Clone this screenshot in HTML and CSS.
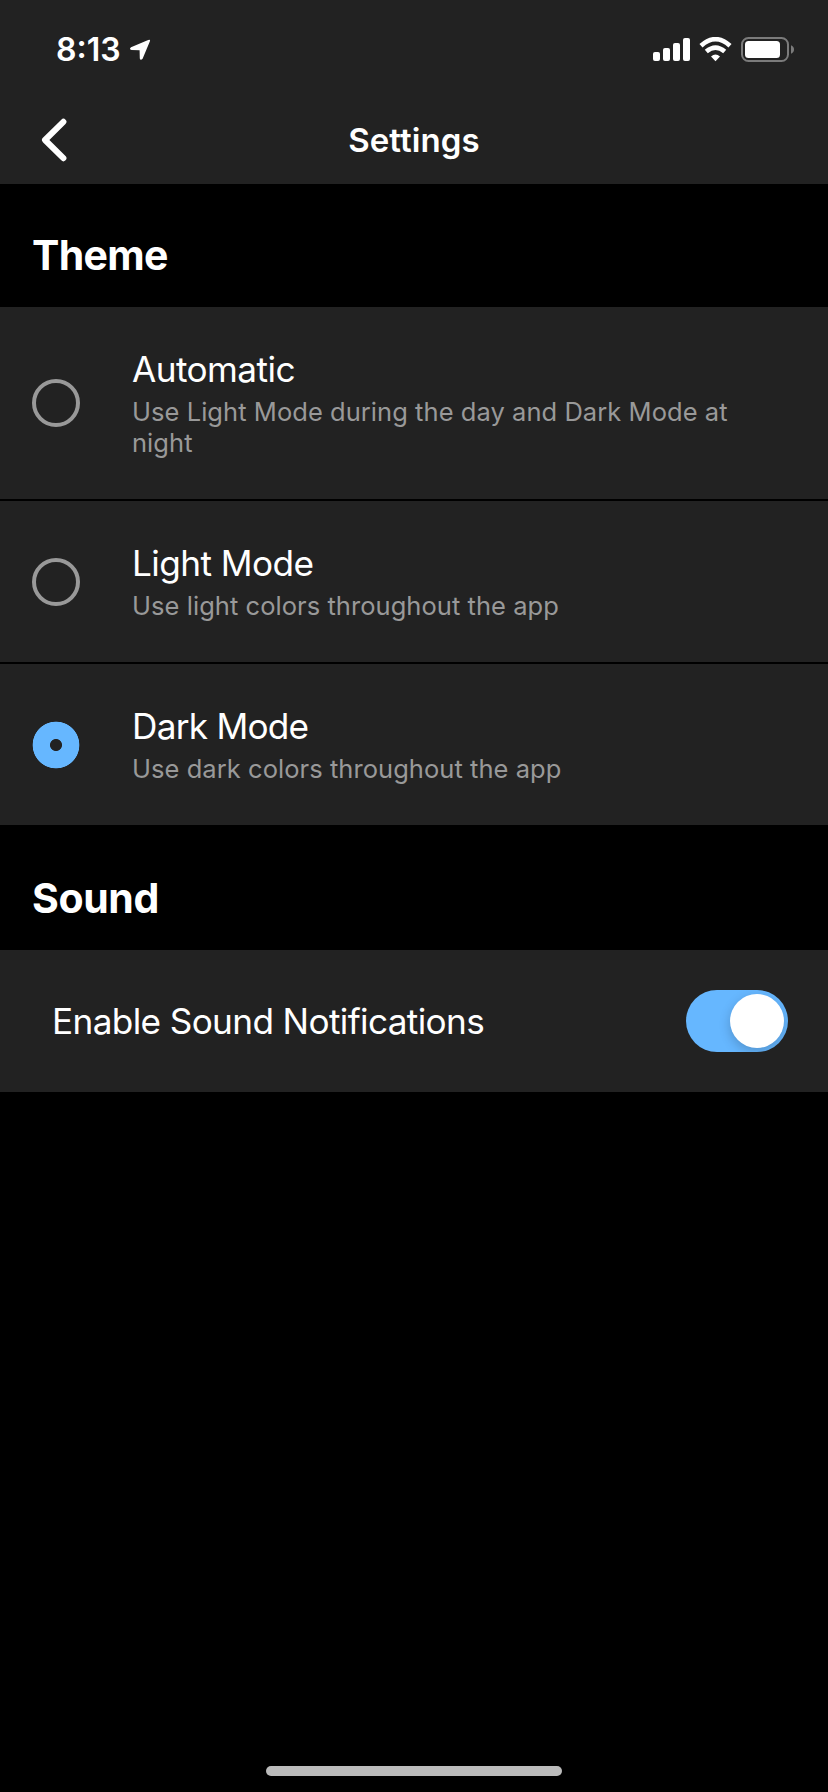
FILE: index.html
```html
<!DOCTYPE html>
<html lang="en">
<head>
<meta charset="utf-8">
<title>Settings</title>
<link rel="stylesheet" href="styles.css">
</head>
<body>
<div class="screen">
  <div class="status-bar">
    <div class="status-left">
      <span class="clock">8:13</span>
      <svg class="location" width="22" height="22" viewBox="0 0 22 22"><path d="M2 8.2 19.2 1 Q21.8 0 20.8 2.6 L13.6 19.8 Q11.4 22 10.8 19.4 L10.6 11.2 2.6 11 Q-.4 10.4 2 8.2Z" fill="#fff"/></svg>
    </div>
    <svg class="indicators" width="142" height="26" viewBox="653 37 142 26">
      <g fill="#fff">
        <rect x="653" y="52" width="7" height="9" rx="2"/>
        <rect x="663" y="48" width="7" height="13" rx="2"/>
        <rect x="673" y="43" width="7" height="18" rx="2"/>
        <rect x="683" y="38" width="7" height="23" rx="2"/>
        <path d="M715.5 61.2 711 56.6Q715.5 52.6 720 56.6Z"/>
      </g>
      <path d="M701 45.8Q715.5 32.6 730 45.8M706.3 51.6Q715.5 43.6 724.7 51.6" fill="none" stroke="#fff" stroke-width="4.6"/>
      <rect x="742" y="38" width="46" height="23" rx="6.5" fill="none" stroke="#7b7b7b" stroke-width="2"/>
      <rect x="745" y="41" width="35" height="17" rx="3.5" fill="#fff"/>
      <path d="M791 45.3Q794 46.5 794 49.5T791 53.7Z" fill="#7b7b7b"/>
    </svg>
  </div>
  <header class="nav">
    <svg class="back" width="26" height="44" viewBox="0 0 26 44"><path d="M22.4 3.8 4 22 22.4 40.2" fill="none" stroke="#fff" stroke-width="6" stroke-linecap="round" stroke-linejoin="round"/></svg>
    <h1 class="nav-title">Settings</h1>
  </header>
  <main>
    <h2 class="section-title">Theme</h2>
    <div class="option">
      <span class="radio"></span>
      <div class="option-text"><span class="option-title">Automatic</span><span class="option-note">Use Light Mode during the day and Dark Mode at night</span></div>
    </div>
    <div class="option">
      <span class="radio"></span>
      <div class="option-text"><span class="option-title">Light Mode</span><span class="option-note">Use light colors throughout the app</span></div>
    </div>
    <div class="option">
      <span class="radio selected"></span>
      <div class="option-text"><span class="option-title dark">Dark Mode</span><span class="option-note">Use dark colors throughout the app</span></div>
    </div>
    <h2 class="section-title sound">Sound</h2>
    <div class="setting">
      <span class="setting-label">Enable Sound Notifications</span>
      <span class="toggle"><span class="knob"></span></span>
    </div>
  </main>
  <div class="home-indicator"></div>
</div>
</body>
</html>
```
FILE: styles.css
```css
* { box-sizing: border-box; }
body { margin: 0; background: #000; }
.screen {
  display: flex;
  flex-direction: column;
  height: 1792px;
  background: #000;
  color: #fff;
  font-family: Inter, "Liberation Sans", sans-serif;
}
.status-bar {
  display: flex;
  align-items: center;
  justify-content: space-between;
  height: 96px;
  padding: 3px 33px 0 56px;
  background: #222;
}
.status-left { display: flex; align-items: center; gap: 8px; }
.clock { font-size: 32px; font-weight: 600; line-height: 38px; }
.nav {
  display: grid;
  grid-template-columns: 96px 1fr 96px;
  align-items: center;
  height: 88px;
  background: #222;
}
.back { margin-left: 41px; }
.nav-title { margin: 0; font-size: 33px; font-weight: 600; line-height: 40px; letter-spacing: .1px; text-align: center; }
.section-title { margin: 0; height: 123px; padding: 47px 32px 0; font-size: 41px; font-weight: 700; line-height: 48px; letter-spacing: -.7px; }
.section-title.sound { letter-spacing: -.4px; }
.option {
  display: flex;
  align-items: center;
  padding: 41px 60px 41px 32px;
  background: #222;
  border-bottom: 2px solid #000;
}
.radio { flex: none; width: 48px; height: 48px; border: 4px solid #999; border-radius: 50%; }
.radio.selected { border: 0; background: radial-gradient(circle, #222 5.6px, #66b7ff 6.4px, #66b7ff 23px, transparent 23.7px); }
.option-text { display: flex; flex-direction: column; gap: 6px; margin-left: 52px; }
.option-title { font-size: 35.2px; line-height: 42px; letter-spacing: -.57px; }
.option-title.dark { letter-spacing: -.75px; }
.option-note { font-size: 25.5px; line-height: 31px; letter-spacing: .05px; color: #999; }
.setting {
  display: flex;
  align-items: center;
  justify-content: space-between;
  height: 142px;
  padding: 0 40px 0 52px;
  background: #222;
}
.setting-label { font-size: 35.2px; line-height: 42px; letter-spacing: -.64px; }
.toggle { display: flex; justify-content: flex-end; width: 102px; height: 62px; padding: 4px; border-radius: 31px; background: #66b7ff; overflow: hidden; }
.knob { width: 54px; height: 54px; border-radius: 50%; background: #fff; box-shadow: 0 4px 12px rgba(0, 0, 0, .2); }
.home-indicator { width: 296px; height: 10px; margin: auto auto 16px; border-radius: 5px; background: #bbb; }
```
